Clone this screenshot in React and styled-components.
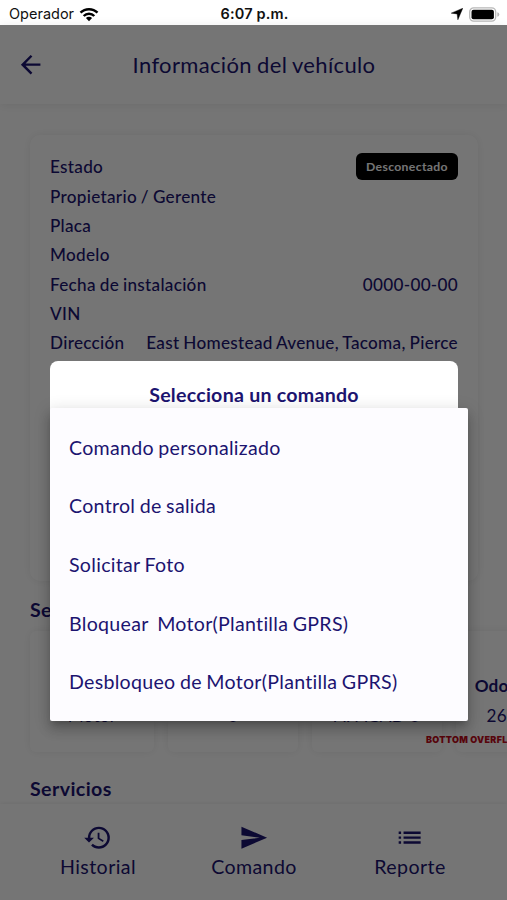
import React from 'react';
import styled, { createGlobalStyle } from 'styled-components';
import { MdArrowBack, MdHistory, MdSend, MdList } from 'react-icons/md';

const Global = createGlobalStyle`
  * { box-sizing: border-box; }
  html, body { margin: 0; padding: 0; overflow: hidden; }
  body { background: #fff; font-family: Lato, "Open Sans", sans-serif; color: #1c1470; }
`;

const Screen = styled.div`
  display: flex;
  flex-direction: column;
  width: 507px;
  height: 900px;
  overflow: hidden;
  background: #fff;
`;

const StatusBar = styled.header`
  display: grid;
  grid-template-columns: 1fr auto 1fr;
  align-items: center;
  height: 25px;
  flex: none;
  padding: 3px 7px 0 9px;
  font: 14.5px/22px Inter, sans-serif;
  color: #111;
`;
const Carrier = styled.div`
  display: flex;
  align-items: center;
  gap: 5px;
`;
const Clock = styled.div`
  font-weight: 600;
  letter-spacing: 0.15px;
`;
const Indicators = styled.div`
  display: flex;
  justify-content: flex-end;
  align-items: center;
  gap: 6px;
`;

const Page = styled.main`
  position: relative;
  display: flex;
  flex-direction: column;
  flex: 1;
  min-height: 0;
`;
const TopBar = styled.div`
  display: grid;
  grid-template-columns: 61px 1fr 60px;
  align-items: center;
  height: 79px;
  flex: none;
  box-shadow: 0 1px 10px rgba(0, 0, 0, 0.08);
`;
const BackButton = styled.button`
  display: flex;
  justify-content: center;
  border: 0;
  padding: 0;
  background: none;
  color: inherit;
`;
const Title = styled.h1`
  margin: 0;
  text-align: center;
  font-size: 22px;
  font-weight: 400;
  line-height: 28px;
  letter-spacing: 0.35px;
  word-spacing: -0.8px;
  white-space: nowrap;
`;

const Content = styled.div`
  display: flex;
  flex-direction: column;
  flex: 1;
  min-height: 0;
  padding: 31px 0 0 30px;
  overflow: hidden;
`;
const cardShadow = '0 0 10px rgba(0, 0, 0, 0.07)';
const InfoCard = styled.section`
  width: 448px;
  height: 446px;
  flex: none;
  padding: 16px 20px;
  border-radius: 10px;
  background: #fff;
  box-shadow: ${cardShadow};
`;
const InfoRow = styled.div`
  display: flex;
  justify-content: space-between;
  align-items: center;
  height: ${(p) => p.$h || 29.3}px;
  font-size: 17.14px;
  font-weight: 500;
  letter-spacing: 0.3px;
  word-spacing: -0.7px;
  white-space: nowrap;
`;
const Badge = styled.span`
  display: flex;
  align-items: center;
  justify-content: center;
  width: 102px;
  height: 27px;
  border-radius: 6px;
  background: #000;
  color: #fff;
  font-size: 12.2px;
  font-weight: 700;
  letter-spacing: 0.35px;
`;
const Heading = styled.h2`
  margin: ${(p) => p.$top || 0}px 0 0;
  height: 24px;
  flex: none;
  font-size: 19.6px;
  line-height: 24px;
  font-weight: 700;
  letter-spacing: 0.4px;
`;
const SensorList = styled.div`
  display: flex;
  gap: 14px;
  width: max-content;
  height: 121px;
  flex: none;
  margin: 9px 0 25px;
`;
const SensorCard = styled.div`
  position: relative;
  display: flex;
  flex-direction: column;
  align-items: center;
  justify-content: flex-end;
  width: ${(p) => p.$w}px;
  padding-bottom: 21px;
  border-radius: 6px;
  background: #fff;
  box-shadow: ${cardShadow};
  font-size: 17.14px;
  line-height: 30px;
  letter-spacing: 0.3px;
  white-space: nowrap;
`;
const SensorName = styled.b`
  letter-spacing: 0.1px;
`;
const OverflowWarning = styled.span`
  position: absolute;
  left: -30px;
  bottom: 6px;
  color: #c00c1c;
  font: 900 9px/12px Inter, sans-serif;
  letter-spacing: 0.3px;
`;
const BottomNav = styled.nav`
  display: grid;
  grid-template-columns: repeat(3, 1fr);
  height: 96px;
  flex: none;
  padding: 19px 19px 0 20px;
  box-shadow: 0 -1px 4px rgba(0, 0, 0, 0.06);
  background: #fff;
`;
const NavItem = styled.button`
  display: flex;
  flex-direction: column;
  align-items: center;
  height: 60px;
  border: 0;
  padding: 0;
  background: none;
  color: inherit;
  font: 19.6px/30px Lato, sans-serif;
  letter-spacing: 0.4px;
`;

const Scrim = styled.div`
  position: absolute;
  inset: 0;
  background: rgba(0, 0, 0, 0.54);
`;
const Dialog = styled.section`
  position: absolute;
  top: 336px;
  left: 50px;
  width: 408px;
  height: 230px;
  padding-top: 22px;
  border-radius: 8px;
  background: #fff;
  text-align: center;
`;
const DialogTitle = styled.h2`
  margin: 0;
  font-size: 19.6px;
  line-height: 24px;
  font-weight: 700;
  letter-spacing: 0.25px;
`;
const Menu = styled.ul`
  position: absolute;
  top: 383px;
  left: 50px;
  width: 418px;
  height: 313px;
  margin: 0;
  padding: 10px 19px;
  list-style: none;
  border-radius: 2px;
  background: #fdfcff;
  box-shadow: 0 5px 6px -3px rgba(0, 0, 0, 0.2), 0 9px 12px 1px rgba(0, 0, 0, 0.14), 0 3px 16px 2px rgba(0, 0, 0, 0.12);
`;
const MenuItem = styled.li`
  display: flex;
  align-items: center;
  height: 58.6px;
  font-size: 19.6px;
  letter-spacing: 0.28px;
  word-spacing: -0.8px;
  white-space: pre;
`;

const rows = [
  ['Propietario / Gerente', ''],
  ['Placa', ''],
  ['Modelo', ''],
  ['Fecha de instalación', '0000-00-00'],
  ['VIN', ''],
  ['Dirección', 'East Homestead Avenue, Tacoma, Pierce'],
];
const sensors = [
  { width: 124, value: 'Motor' },
  { width: 130, value: '0' },
  { width: 130, value: 'APAGAD 0' },
  { width: 130, name: 'Odometraje', value: '2621 km', warning: 'BOTTOM OVERFLOWED' },
];
const commands = [
  'Comando personalizado',
  'Control de salida',
  'Solicitar Foto',
  'Bloquear  Motor(Plantilla GPRS)',
  'Desbloqueo de Motor(Plantilla GPRS)',
];
const tabs = [
  { label: 'Historial', Icon: MdHistory },
  { label: 'Comando', Icon: MdSend },
  { label: 'Reporte', Icon: MdList },
];

export default function App() {
  return (
    <Screen>
      <Global />
      <StatusBar>
        <Carrier>
          Operador
          <svg width="20" height="15" viewBox="0 0 20 15">
            <path d="M1.5 5.7a12 12 0 0 1 17 0M4.7 9a7.4 7.4 0 0 1 10.6 0" fill="none" stroke="#000" strokeWidth="2.5" />
            <path d="M10 14.3 6.9 11.1a4.4 4.4 0 0 1 6.2 0z" />
          </svg>
        </Carrier>
        <Clock>6:07 p.m.</Clock>
        <Indicators>
          <svg width="12" height="12" viewBox="0 0 11 11">
            <path d="M10.8.2 6.3 10.8 5.6 5.4.2 4.7z" stroke="#000" strokeWidth=".4" />
          </svg>
          <svg width="31" height="15" viewBox="0 0 31 15">
            <rect x=".7" y=".9" width="26" height="13.2" rx="4" fill="#fff" stroke="#b8b8b8" strokeWidth="1.3" />
            <rect x="2.5" y="2.7" width="22.4" height="9.6" rx="2" />
            <path d="M28.3 5.2q2 .6 2 2.3t-2 2.3z" fill="#b8b8b8" />
          </svg>
        </Indicators>
      </StatusBar>
      <Page>
        <TopBar>
          <BackButton aria-label="Volver"><MdArrowBack size={29.3} /></BackButton>
          <Title>Información del vehículo</Title>
        </TopBar>
        <Content>
          <InfoCard>
            <InfoRow $h={30.6}>Estado<Badge>Desconectado</Badge></InfoRow>
            {rows.map(([label, value]) => (
              <InfoRow key={label}><span>{label}</span><span>{value}</span></InfoRow>
            ))}
          </InfoCard>
          <Heading $top={17}>Sensores</Heading>
          <SensorList>
            {sensors.map(({ width, name, value, warning }) => (
              <SensorCard key={value} $w={width}>
                {name && <SensorName>{name}</SensorName>}
                <span>{value}</span>
                {warning && <OverflowWarning>{warning}</OverflowWarning>}
              </SensorCard>
            ))}
          </SensorList>
          <Heading>Servicios</Heading>
        </Content>
        <BottomNav>
          {tabs.map(({ label, Icon }) => (
            <NavItem key={label}><Icon size={29.3} />{label}</NavItem>
          ))}
        </BottomNav>
        <Scrim />
        <Dialog role="dialog">
          <DialogTitle>Selecciona un comando</DialogTitle>
        </Dialog>
        <Menu>
          {commands.map((c) => <MenuItem key={c}>{c}</MenuItem>)}
        </Menu>
      </Page>
    </Screen>
  );
}
